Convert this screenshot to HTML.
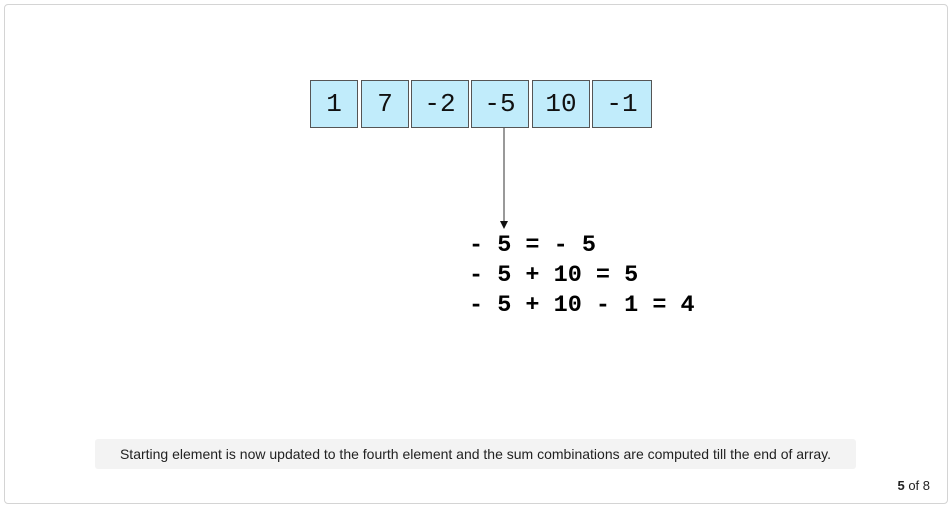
<!DOCTYPE html>
<html><head><meta charset="utf-8"><style>
body{margin:0;width:951px;height:507px;background:#fff;position:relative;font-family:"Liberation Sans",sans-serif;overflow:hidden}
.frame{position:absolute;left:4px;top:4px;width:942px;height:498px;border:1px solid #d4d4d4;border-radius:4px}
.b{position:absolute;top:80px;height:48px;background:#c1ecfb;border:1px solid #555;box-sizing:border-box;font-family:"Liberation Mono",monospace;font-size:26px;display:flex;align-items:center;justify-content:center;color:#111}
.l{position:absolute;left:469px;font-family:"Liberation Mono",monospace;font-weight:bold;font-size:23.5px;white-space:pre;color:#000}
.cap{position:absolute;left:95px;top:439px;width:761px;height:30px;background:#f3f3f3;border-radius:3px;font-size:14px;line-height:30px;text-align:center;color:#222}
.pg{position:absolute;right:21px;top:478px;font-size:13px;color:#222}
</style></head><body>
<div class="frame"></div>
<div class="b" style="left:310px;width:48px">1</div>
<div class="b" style="left:361px;width:48px">7</div>
<div class="b" style="left:411px;width:58px">-2</div>
<div class="b" style="left:471px;width:58px">-5</div>
<div class="b" style="left:532px;width:58px">10</div>
<div class="b" style="left:592px;width:60px">-1</div>
<svg style="position:absolute;left:0;top:0" width="951" height="507"><line x1="504" y1="128" x2="504" y2="222" stroke="#555" stroke-width="1.2"/><path d="M500 221 L508 221 L504 229 Z" fill="#111"/></svg>
<div class="l" style="top:232px">- 5 = - 5</div>
<div class="l" style="top:262px">- 5 + 10 = 5</div>
<div class="l" style="top:292px">- 5 + 10 - 1 = 4</div>
<div class="cap">Starting element is now updated to the fourth element and the sum combinations are computed till the end of array.</div>
<div class="pg"><b>5</b> of 8</div>
</body></html>
